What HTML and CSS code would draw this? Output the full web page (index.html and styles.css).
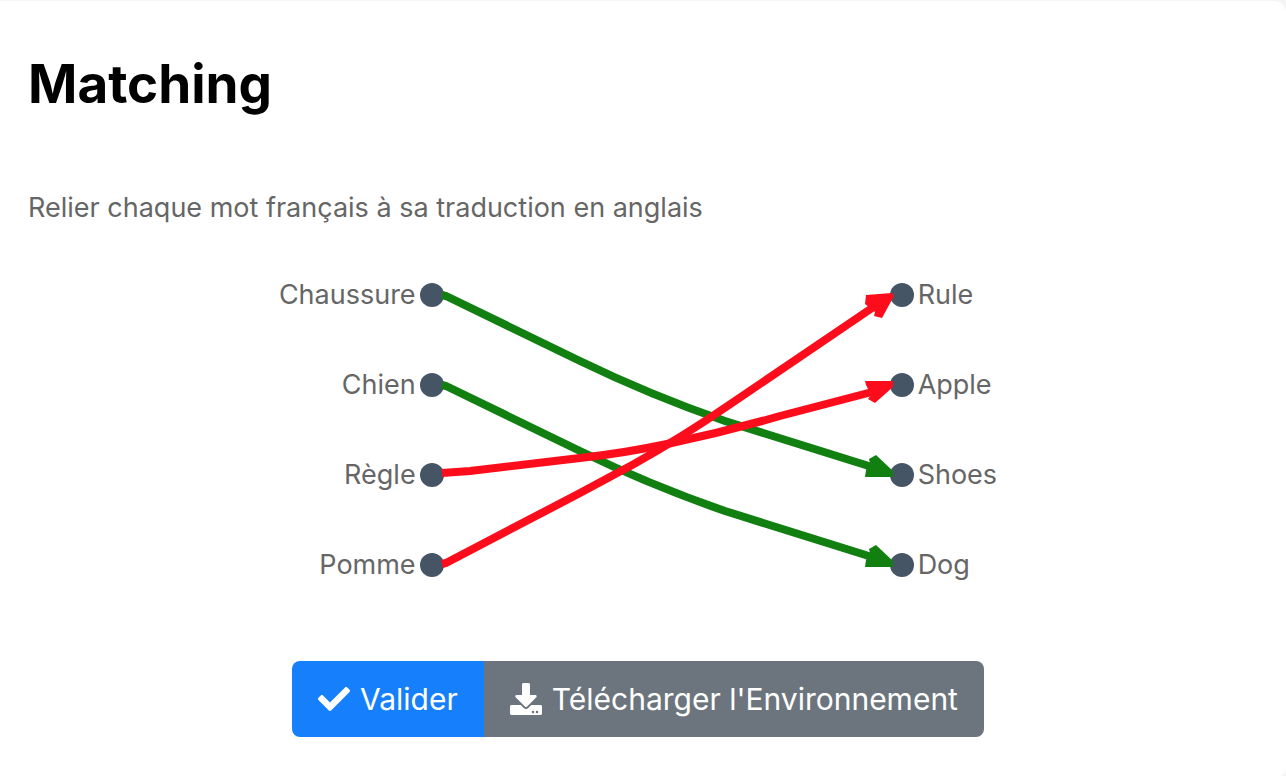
FILE: index.html
```html
<!DOCTYPE html>
<html lang="fr">
<head>
<meta charset="utf-8">
<meta name="viewport" content="width=device-width, initial-scale=1">
<title>Matching</title>
<link rel="stylesheet" href="styles.css">
</head>
<body>
<main class="card">
  <h1 class="title">Matching</h1>
  <p class="prompt">Relier chaque mot français à sa traduction en anglais</p>
  <section class="board" aria-label="Association">
    <ul class="words words-left">
      <li class="word">Chaussure<span class="dot"></span></li>
      <li class="word">Chien<span class="dot"></span></li>
      <li class="word">Règle<span class="dot"></span></li>
      <li class="word">Pomme<span class="dot"></span></li>
    </ul>
    <svg class="links" viewBox="0 0 446 360" aria-hidden="true">
      <g class="link link-ok">
        <path d="M-2 45L2 46L136 111Q206 145 281 171L428 217"/>
        <path class="head" d="M421 227H449V221L432 205L425 209L426 213L422 220Z"/>
        <path d="M-2 135L2 136L136 201Q206 235 281 261L428 307"/>
        <path class="head" d="M421 317H449V311L432 295L425 299L426 303L422 310Z"/>
      </g>
      <g class="link link-wrong">
        <path d="M-2 223L26 221L136 208Q181 203 223 194Q280 182 336 166L428 142"/>
        <path class="head" d="M421 131H449V137L431 153L424 149L427 145L422 135Z"/>
        <path d="M-2 314L2 313L136 243L190 214Q240 186 285 155L428 58"/>
        <path class="head" d="M422 45L448 43L450 46L438 68L430 66L431 62L421 54Z"/>
      </g>
    </svg>
    <ul class="words words-right">
      <li class="word"><span class="dot"></span>Rule</li>
      <li class="word"><span class="dot"></span>Apple</li>
      <li class="word"><span class="dot"></span>Shoes</li>
      <li class="word"><span class="dot"></span>Dog</li>
    </ul>
  </section>
  <div class="actions">
    <button class="btn btn-primary" type="button">
      <svg class="icon" viewBox="0 0 512 512" aria-hidden="true"><path d="M173.898 439.404l-166.4-166.4c-9.997-9.997-9.997-26.206 0-36.204l36.203-36.204c9.997-9.998 26.207-9.998 36.204 0L192 312.69 432.095 72.596c9.997-9.997 26.207-9.997 36.204 0l36.203 36.204c9.997 9.997 9.997 26.206 0 36.204l-294.4 294.401c-9.998 9.997-26.207 9.997-36.204-.001z"/></svg>
      Valider
    </button>
    <button class="btn btn-secondary" type="button">
      <svg class="icon" viewBox="0 0 512 512" aria-hidden="true"><path d="M216 0h80c13.3 0 24 10.7 24 24v168h87.7c17.8 0 26.7 21.5 14.1 34.1L269.7 378.3c-7.5 7.5-19.8 7.5-27.3 0L90.1 226.1c-12.6-12.6-3.7-34.1 14.1-34.1H192V24c0-13.3 10.7-24 24-24zm296 376v112c0 13.3-10.7 24-24 24H24c-13.3 0-24-10.7-24-24V376c0-13.3 10.7-24 24-24h146.7l49 49c20.1 20.1 52.5 20.1 72.6 0l49-49H488c13.3 0 24 10.7 24 24zm-124 88c0-11-9-20-20-20s-20 9-20 20 9 20 20 20 20-9 20-20zm64 0c0-11-9-20-20-20s-20 9-20 20 9 20 20 20 20-9 20-20z"/></svg>
      Télécharger l'Environnement
    </button>
  </div>
</main>
</body>
</html>
```
FILE: styles.css
```css
* {
  box-sizing: border-box;
}

body {
  margin: 0;
  background: #f5f5f5;
  color: #666;
  font-family: Inter, "Liberation Sans", sans-serif;
  font-size: 27px;
  line-height: 36px;
}

.card {
  min-height: calc(100vh - 1px);
  margin-top: 1px;
  padding: 48px 38px 39px 28px;
  border-radius: 0 12px 8px 0;
  background: #fff;
}

.title {
  margin: 0;
  color: #000;
  font-size: 53px;
  font-weight: 700;
  line-height: 70px;
}

.prompt {
  margin: 71px 0 24px;
}

.board {
  display: flex;
  justify-content: center;
}

.words {
  display: grid;
  grid-auto-rows: 90px;
  margin: 0;
  padding: 0;
  list-style: none;
}

.word {
  display: flex;
  align-items: center;
  gap: 4px;
}

.words-left .word {
  justify-content: flex-end;
}

.dot {
  flex: none;
  width: 24px;
  height: 24px;
  border-radius: 50%;
  background: #465566;
}

.links {
  position: relative;
  flex: none;
  width: 446px;
  height: 360px;
  overflow: visible;
}

.link {
  fill: none;
  stroke-width: 8px;
}

.link-ok {
  stroke: #118011;
}

.link-wrong {
  stroke: #fd0d1b;
}

.head {
  stroke: none;
}

.link-ok .head {
  fill: #118011;
}

.link-wrong .head {
  fill: #fd0d1b;
}

.actions {
  display: flex;
  justify-content: center;
  margin-top: 51px;
}

.btn {
  display: flex;
  align-items: center;
  gap: 10px;
  padding: 14px 26px;
  border: 0;
  color: #fff;
  font: inherit;
  font-size: 30px;
  line-height: 48px;
}

.btn-primary {
  border-radius: 8px 0 0 8px;
  background: #167ffc;
}

.btn-secondary {
  border-radius: 0 8px 8px 0;
  background: #6c757d;
}

.icon {
  width: 32px;
  height: 32px;
  fill: currentColor;
}
```
